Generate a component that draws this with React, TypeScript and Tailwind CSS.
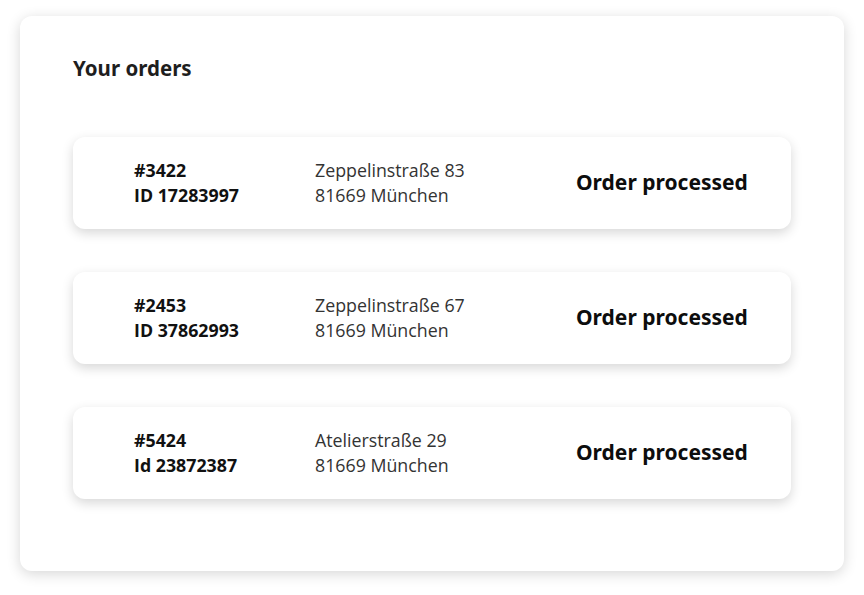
const orders = [
  { num: '#3422', id: 'ID 17283997', street: 'Zeppelinstraße 83', city: '81669 München' },
  { num: '#2453', id: 'ID 37862993', street: 'Zeppelinstraße 67', city: '81669 München' },
  { num: '#5424', id: 'Id 23872387', street: 'Atelierstraße 29', city: '81669 München' },
];

export default function App() {
  return (
    <div className="w-[864px] h-[595px] bg-white pt-4 px-5" style={{ fontFamily: '"Open Sans", sans-serif' }}>
      <div className="w-[824px] h-[555px] bg-white rounded-xl shadow-[0_3px_14px_rgba(0,0,0,0.16)] pt-[38px] px-[53px]">
        <h1 className="text-[20.5px] leading-[28px] font-bold text-[#1e1e1e]" style={{ fontFamily: '"Noto Sans", sans-serif' }}>
          Your orders
        </h1>
        <div className="mt-[55px] flex flex-col gap-[43px]">
          {orders.map((o) => (
            <div key={o.num} className="h-[92px] rounded-xl bg-white shadow-[0_4px_12px_rgba(0,0,0,0.16)] flex items-center pl-[61px]">
              <div className="w-[181px] text-[17.8px] leading-[25px] font-bold text-[#111]">
                <div>{o.num}</div>
                <div>{o.id}</div>
              </div>
              <div className="w-[261px] text-[17.8px] leading-[25px] text-[#333]">
                <div>{o.street}</div>
                <div>{o.city}</div>
              </div>
              <div className="text-[21px] font-bold text-[#0d0d0d]" style={{ fontFamily: '"Noto Sans", sans-serif' }}>
                Order processed
              </div>
            </div>
          ))}
        </div>
      </div>
    </div>
  );
}
